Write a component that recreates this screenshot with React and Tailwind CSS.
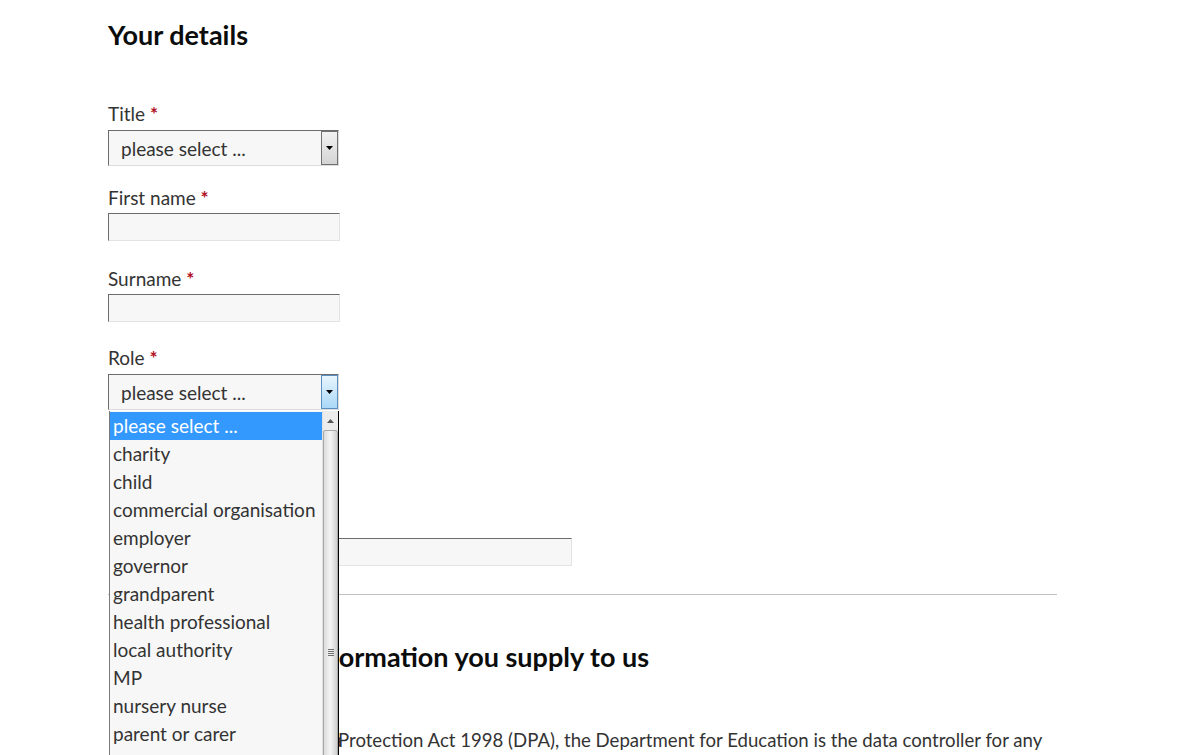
import React from "react";

const ARROW = (
  <svg width="7" height="4" viewBox="0 0 7 4"><path d="M0 0h7L3.5 4z" fill="#000" /></svg>
);

function Label({ children }) {
  return (
    <div className="text-[19px] leading-[25px] text-[#333]">
      {children} <span className="text-[#b10e1e] font-bold">*</span>
    </div>
  );
}

function Select({ active }) {
  return (
    <div className="mt-[4px] w-[231px] h-[36px] flex items-stretch bg-[#f7f7f7] border border-t-[#6c6c6c] border-l-[#6c6c6c] border-b-[#dcdcdc] border-r-[#dcdcdc]">
      <div className="flex-1 pl-[12px] pt-[2px] flex items-center text-[19px] text-[#333]">please select ...</div>
      <div
        className={
          active
            ? "w-[17px] border border-[#5b8fbf] bg-gradient-to-b from-[#e8f5fd] to-[#a9d8f7] flex items-center justify-center"
            : "w-[17px] border border-[#707070] bg-gradient-to-b from-[#f2f2f2] to-[#d4d4d4] flex items-center justify-center"
        }
      >
        {ARROW}
      </div>
    </div>
  );
}

function Input({ w = "w-[232px]", hidden }) {
  return (
    <div
      className={
        hidden
          ? `mt-[3px] ml-[1px] ${w} h-[28px] bg-[#f7f7f7] border border-l-0 border-t-[#6c6c6c] border-b-[#e3e3e3] border-r-[#e3e3e3]`
          : `mt-[3px] ${w} h-[28px] bg-[#f7f7f7] border border-t-[#6c6c6c] border-l-[#6c6c6c] border-b-[#e3e3e3] border-r-[#e3e3e3]`
      }
    />
  );
}

const OPTIONS = [
  "please select ...",
  "charity",
  "child",
  "commercial organisation",
  "employer",
  "governor",
  "grandparent",
  "health professional",
  "local authority",
  "MP",
  "nursery nurse",
  "parent or carer",
  "pupil",
  "school",
];

export default function App() {
  return (
    <div className="relative h-[755px] overflow-hidden bg-white font-['Lato',sans-serif] text-[#0b0c0c]">
      <div className="pl-[108px] pt-[19px]">
        <h1 className="text-[27px] leading-[32px] font-bold">Your details</h1>

        <div className="mt-[50px]">
          <Label>Title</Label>
          <Select />
        </div>
        <div className="mt-[19px]">
          <Label>First name</Label>
          <Input />
        </div>
        <div className="mt-[25px]">
          <Label>Surname</Label>
          <Input />
        </div>
        <div className="mt-[23px]">
          <Label>Role</Label>
          <Select active />
        </div>
        <div className="mt-[100px]">
          <Label>Email address</Label>
          <Input w="w-[463px]" hidden />
        </div>

        <div className="mt-[28px] w-[949px] h-px bg-[#bfc1c3]" />

        <h2 className="mt-[46px] text-[27px] leading-[32px] font-bold">How we use the information you supply to us</h2>
        <p className="mt-[55px] text-[18.6px] leading-[25px] text-[#333] whitespace-nowrap">
          <span className="inline-block w-[230px]">For the purposes of the Data</span>
          Protection Act 1998 (DPA), the Department for Education is the data controller for any
        </p>
      </div>

      <div className="absolute left-[109px] top-[411px] w-[230px] h-[400px] bg-[#f7f7f7] border-l border-l-[#7a7a7a] border-r border-r-black flex">
        <div className="flex-1 pt-[1px]">
          {OPTIONS.map((o, i) => (
            <div
              key={o}
              className={
                i === 0
                  ? "h-[28px] pl-[3px] flex items-center text-[19px] bg-[#3399ff] text-white"
                  : "h-[28px] pl-[3px] flex items-center text-[19px] text-[#333]"
              }
            >
              {o}
            </div>
          ))}
        </div>
        <div className="w-[16px] flex flex-col bg-[#ececec] border-l border-l-[#e0e0e0]">
          <div className="h-[19px] flex items-center justify-center">
            <svg width="7" height="4" viewBox="0 0 7 4"><path d="M0 4h7L3.5 0z" fill="#555" /></svg>
          </div>
          <div className="flex-1 bg-gradient-to-r from-[#dcdcdc] via-[#f4f4f4] to-[#cfcfcf] border border-[#a8a8a8] rounded-[2px] flex items-start justify-center pt-[218px]">
            <div className="flex flex-col gap-[1px]">
              <div className="w-[6px] h-px bg-[#707070]" />
              <div className="w-[6px] h-px bg-[#707070]" />
              <div className="w-[6px] h-px bg-[#707070]" />
              <div className="w-[6px] h-px bg-[#707070]" />
            </div>
          </div>
        </div>
      </div>
    </div>
  );
}
